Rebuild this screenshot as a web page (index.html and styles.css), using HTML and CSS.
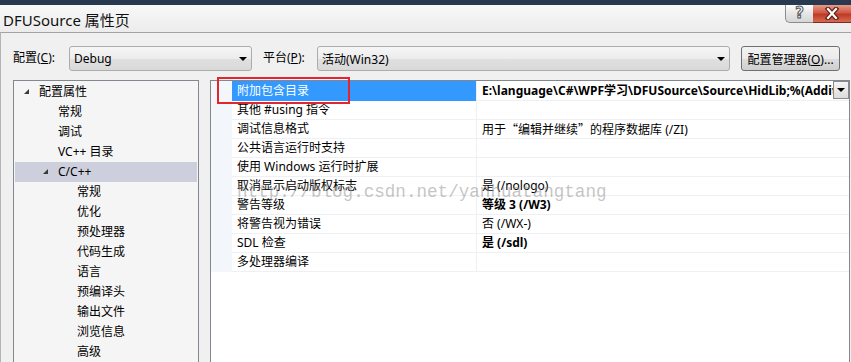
FILE: index.html
```html
<!DOCTYPE html>
<html lang="zh-CN">
<head>
    <meta charset="UTF-8">
    <meta name="viewport" content="width=device-width, initial-scale=1.0">
    <title>DFUSource 属性页</title>
    <link rel="stylesheet" href="styles.css">
</head>
<body>
    <div class="top-strip"></div>
    <div class="titlebar">
        <span class="title">DFUSource 属性页</span>
        <div class="win-buttons">
            <div class="btn-help">?</div>
            <div class="btn-close">
                <svg width="18" height="13" viewBox="0 0 18 13">
                    <path d="M5 2 L13 11 M13 2 L5 11" stroke="#5b1d14" stroke-width="4.5" stroke-linecap="square"/>
                    <path d="M5 2 L13 11 M13 2 L5 11" stroke="#ffffff" stroke-width="2.2" stroke-linecap="square"/>
                </svg>
            </div>
        </div>
    </div>

    <div class="dialog">
        <div class="toolbar">
            <label class="field-label lbl-config">配置(<u>C</u>):</label>
            <div class="combo combo-config"><span class="combo-text">Debug</span><span class="arrow"></span></div>
            <label class="field-label lbl-platform">平台(<u>P</u>):</label>
            <div class="combo combo-platform"><span class="combo-text">活动(Win32)</span><span class="arrow"></span></div>
            <button class="manager-btn">配置管理器(<u>O</u>)...</button>
        </div>

        <div class="main">
            <!-- 左侧属性树 -->
            <div class="tree">
                <div class="node lvl0"><i class="expander"></i>配置属性</div>
                <div class="node lvl1">常规</div>
                <div class="node lvl1">调试</div>
                <div class="node lvl1">VC++ 目录</div>
                <div class="node lvl1 selected"><i class="expander"></i>C/C++</div>
                <div class="node lvl2">常规</div>
                <div class="node lvl2">优化</div>
                <div class="node lvl2">预处理器</div>
                <div class="node lvl2">代码生成</div>
                <div class="node lvl2">语言</div>
                <div class="node lvl2">预编译头</div>
                <div class="node lvl2">输出文件</div>
                <div class="node lvl2">浏览信息</div>
                <div class="node lvl2">高级</div>
            </div>

            <!-- 右侧属性网格 -->
            <div class="grid">
                <div class="row active">
                    <div class="gutter"></div>
                    <div class="name">附加包含目录</div>
                    <div class="value bold">
                        <span class="value-text">E:\language\C#\WPF学习\DFUSource\Source\HidLib;%(AdditionalIncludeDirectories)</span>
                        <span class="drop-btn"><span class="arrow"></span></span>
                    </div>
                </div>
                <div class="row"><div class="gutter"></div><div class="name">其他 #using 指令</div><div class="value"></div></div>
                <div class="row"><div class="gutter"></div><div class="name">调试信息格式</div><div class="value">用于<span class="cjk-quote">“</span>编辑并继续<span class="cjk-quote">”</span>的程序数据库 (/ZI)</div></div>
                <div class="row"><div class="gutter"></div><div class="name">公共语言运行时支持</div><div class="value"></div></div>
                <div class="row"><div class="gutter"></div><div class="name">使用 Windows 运行时扩展</div><div class="value"></div></div>
                <div class="row"><div class="gutter"></div><div class="name">取消显示启动版权标志</div><div class="value">是 (/nologo)</div></div>
                <div class="row"><div class="gutter"></div><div class="name">警告等级</div><div class="value bold">等级 3 (/W3)</div></div>
                <div class="row"><div class="gutter"></div><div class="name">将警告视为错误</div><div class="value">否 (/WX-)</div></div>
                <div class="row"><div class="gutter"></div><div class="name">SDL 检查</div><div class="value bold">是 (/sdl)</div></div>
                <div class="row"><div class="gutter"></div><div class="name">多处理器编译</div><div class="value"></div></div>
            </div>
        </div>
    </div>

    <div class="highlight-box"></div>
    <div class="watermark">http://blog.csdn.net/yanhuatangtang</div>
</body>
</html>
```

FILE: styles.css
```css
* {
    box-sizing: border-box;
}
body {
    margin: 0;
    width: 851px;
    height: 362px;
    overflow: hidden;
    position: relative;
    font-family: "Noto Sans", "Noto Sans CJK SC", sans-serif;
    font-size: 12px;
    color: #000;
    background-color: #f0f0f0;
}

/* 窗口标题栏 */
.top-strip {
    height: 5px;
    background-color: #28384f;
}
.titlebar {
    height: 27px;
    display: flex;
    align-items: flex-start;
    background: linear-gradient(#f8f8f8, #ececec);
}
.title {
    font-size: 15px;
    line-height: 20px;
    padding: 5px 0 0 3px;
    color: #111;
}
.win-buttons {
    margin-left: auto;
    display: flex;
}
.btn-help {
    width: 28px;
    height: 18px;
    border: 1px solid #8c8c8c;
    border-top: none;
    border-right: none;
    border-radius: 0 0 0 5px;
    background: linear-gradient(#fdfdfd, #e6e6e6 50%, #d6d6d6);
    text-align: center;
    font-family: "DejaVu Sans", sans-serif;
    font-weight: bold;
    font-size: 15px;
    line-height: 17px;
    color: #f4f4f4;
    -webkit-text-stroke: 1px #555;
}
.btn-close {
    width: 38px;
    height: 18px;
    border-bottom: 1px solid #7c2b20;
    background: linear-gradient(#e59a88, #cf5a44 45%, #bf3a26 55%, #d86a50);
    display: flex;
    justify-content: center;
    align-items: center;
}

/* 对话框主体 */
.dialog {
    border-top: 1px solid #a3a3a3;
    border-left: 1px solid #b4b4b4;
    height: 330px;
}
.toolbar {
    display: flex;
    align-items: flex-start;
    padding: 13px 0 0 12px;
    height: 47px;
}
.field-label {
    line-height: 24px;
}
.lbl-config {
    width: 56px;
}
.lbl-platform {
    width: 54px;
    margin-left: 11px;
}
.combo {
    height: 25px;
    border: 1px solid #acacac;
    border-radius: 3px;
    background: linear-gradient(#f6f6f6, #ececec 50%, #e0e0e0 51%, #d9d9d9);
    display: flex;
    align-items: center;
    padding: 0 0 0 4px;
}
.combo-config {
    width: 183px;
}
.combo-platform {
    width: 413px;
}
.combo-text {
    flex: 1;
}
.arrow {
    width: 0;
    height: 0;
    border-left: 4px solid transparent;
    border-right: 4px solid transparent;
    border-top: 4px solid #000;
    margin-right: 4px;
}
.manager-btn {
    width: 99px;
    height: 25px;
    margin-left: 11px;
    border: 1px solid #707070;
    border-radius: 3px;
    background: linear-gradient(#f2f2f2, #ebebeb 50%, #dddddd 51%, #cfcfcf);
    font-family: inherit;
    font-size: 12px;
    padding: 0;
    color: #000;
}

.main {
    display: flex;
    gap: 11px;
    padding-left: 12px;
}

/* 树 */
.tree {
    width: 186px;
    height: 290px;
    border: 1px solid #828790;
    border-bottom: none;
    background-color: #f5f5f5;
    padding: 1px 1px 0 1px;
}
.node {
    height: 20px;
    line-height: 20px;
    white-space: nowrap;
}
.lvl0 { padding-left: 24px; }
.lvl1 { padding-left: 43px; }
.lvl2 { padding-left: 62px; }
.node.selected {
    background-color: #cdd0dc;
}
.expander {
    display: inline-block;
    width: 0;
    height: 0;
    border-left: 5px solid transparent;
    border-bottom: 5px solid #3a3a3a;
    margin: 0 10px 2px -15px;
}

/* 属性网格 */
.grid {
    flex: 1;
    margin-right: 1px;
    height: 290px;
    border: 1px solid #828790;
    border-bottom: none;
    background-color: #fff;
}
.row {
    display: grid;
    grid-template-columns: 21px 245px 1fr;
    height: 19px;
}
.gutter {
    background-color: #f3f6fb;
}
.name {
    padding-left: 5px;
    line-height: 19px;
    border-bottom: 1px solid #eef0f4;
    border-right: 1px solid #eef0f4;
    white-space: nowrap;
}
.value {
    padding-left: 5px;
    line-height: 19px;
    border-bottom: 1px solid #eef0f4;
    white-space: nowrap;
    overflow: hidden;
}
.cjk-quote {
    font-family: "Noto Sans CJK SC", sans-serif;
}
.bold {
    font-weight: bold;
}
.row.active .name {
    background-color: #3399ff;
    color: #fff;
    border-bottom-color: #3399ff;
}
.row.active .value {
    display: flex;
}
.value-text {
    flex: 1;
    overflow: hidden;
}
.drop-btn {
    width: 16px;
    height: 18px;
    border: 1px solid #8a8a8a;
    background: linear-gradient(#f4f4f4, #dcdcdc);
    display: flex;
    align-items: center;
    justify-content: center;
}
.drop-btn .arrow {
    margin-right: 0;
}

/* 叠加层 */
.highlight-box {
    position: absolute;
    left: 217px;
    top: 77px;
    width: 133px;
    height: 27px;
    border: 2px solid #e3262b;
}
.watermark {
    position: absolute;
    left: 237px;
    top: 182px;
    font-family: "Liberation Mono", monospace;
    font-size: 17.6px;
    line-height: 20px;
    color: rgba(140, 140, 140, 0.5);
    white-space: nowrap;
}
```
